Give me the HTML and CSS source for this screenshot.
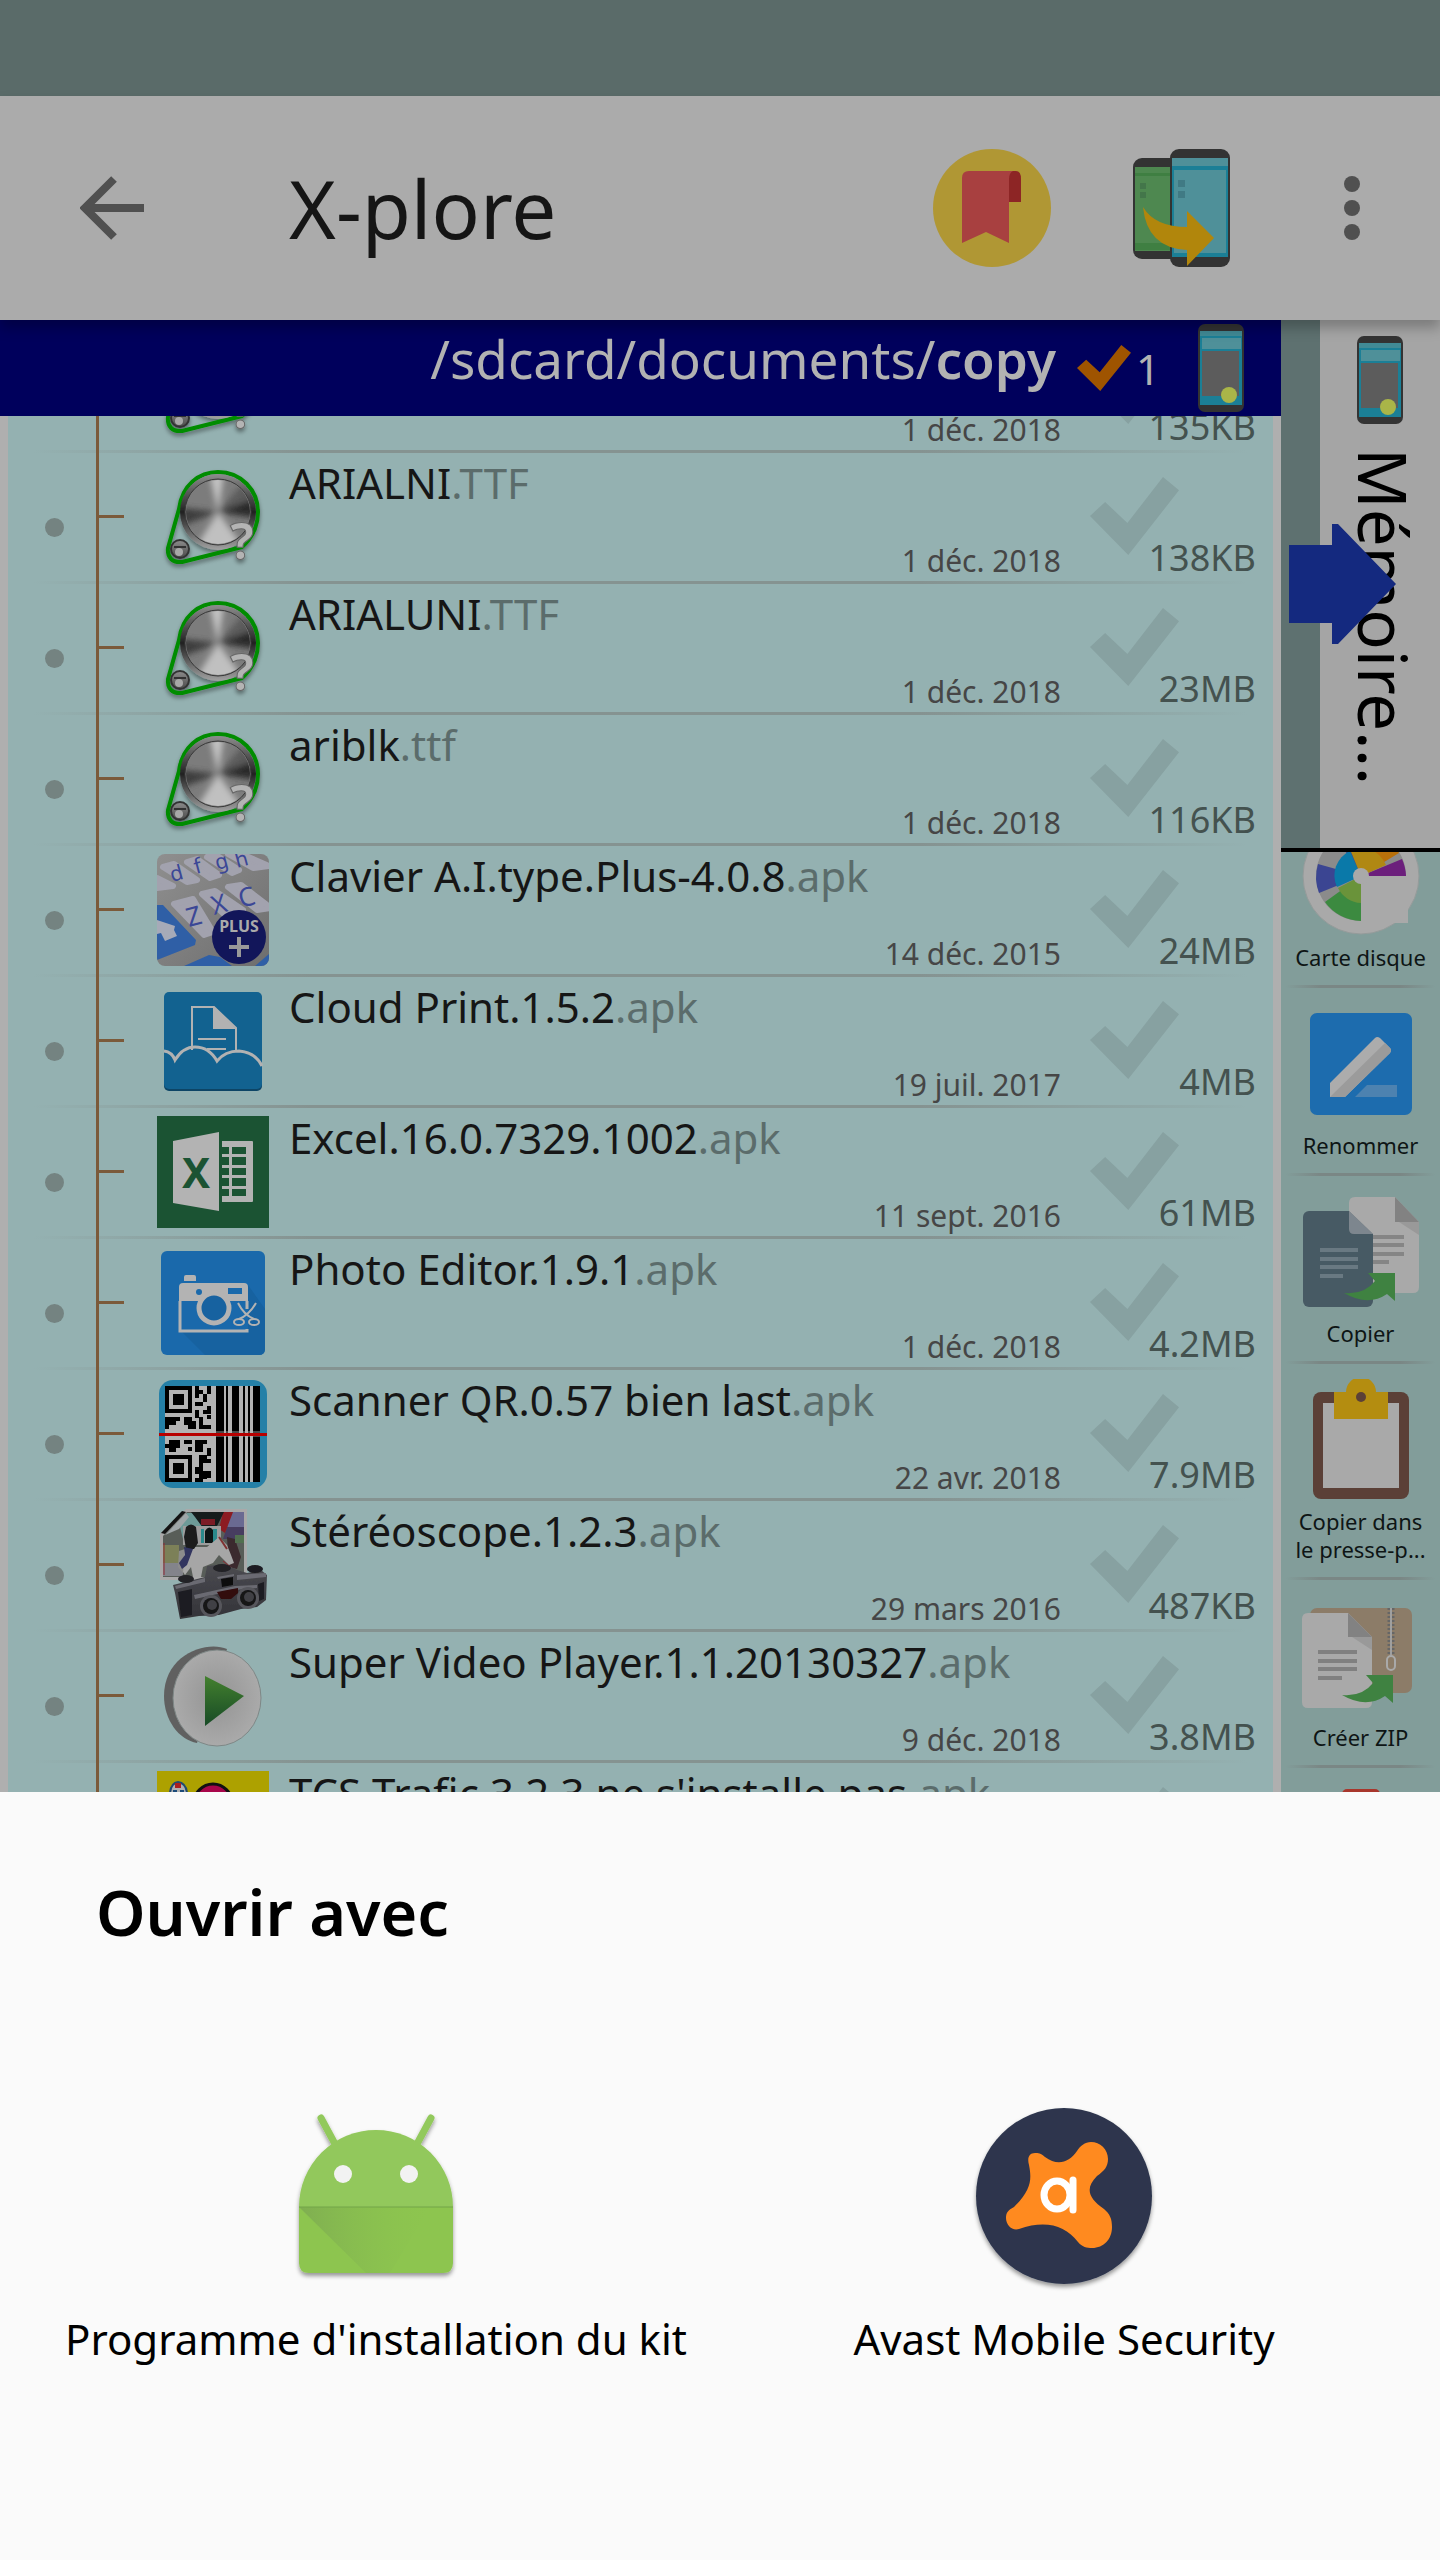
FILE: index.html
```html
<!DOCTYPE html>
<html lang="fr">
<head>
<meta charset="utf-8">
<meta name="viewport" content="width=device-width, initial-scale=1">
<title>X-plore</title>
<link rel="stylesheet" href="styles.css">
</head>
<body>
<svg class="sprite" width="0" height="0" aria-hidden="true">
  <defs>
    <linearGradient id="metal" x1="0" y1="0" x2="0" y2="1"><stop offset="0" stop-color="#8c8c8c"/><stop offset="1" stop-color="#4a4a4a"/></linearGradient>
    <linearGradient id="rim" x1="0" y1="0" x2="0" y2="1"><stop offset="0" stop-color="#8d8d8d"/><stop offset=".5" stop-color="#222"/><stop offset="1" stop-color="#a2a2a2"/></linearGradient>
    <linearGradient id="playTri" x1="0" y1="0" x2="0" y2="1"><stop offset="0" stop-color="#43802e"/><stop offset="1" stop-color="#174a26"/></linearGradient>
    <radialGradient id="playFace"><stop offset="0" stop-color="#939393"/><stop offset="1" stop-color="#aaaaaa"/></radialGradient>
    <linearGradient id="droidShade" x1="0" y1="0" x2="1" y2="0"><stop offset="0" stop-color="#7fae51"/><stop offset="1" stop-color="#8bc34e" stop-opacity="0"/></linearGradient>
    <linearGradient id="keys" x1="0" y1="0" x2="1" y2="1"><stop offset="0" stop-color="#8f8f8f"/><stop offset="1" stop-color="#6e6e6e"/></linearGradient>
    <linearGradient id="body" x1="0" y1="0" x2="0" y2="1"><stop offset="0" stop-color="#4b4b51"/><stop offset="1" stop-color="#333338"/></linearGradient>
    <filter id="soft" x="-20%" y="-20%" width="140%" height="140%"><feDropShadow dx="0" dy="3" stdDeviation="2" flood-opacity=".4"/></filter>
    <filter id="sheen" x="-20%" y="-20%" width="140%" height="140%"><feGaussianBlur stdDeviation="3"/></filter>
    <filter id="photoSoft"><feGaussianBlur stdDeviation=".7"/></filter>
    <clipPath id="discClip"><circle cx="61" cy="51" r="32"/></clipPath>
  </defs>
  <symbol id="i-phone" viewBox="0 0 46 88">
    <rect width="46" height="88" rx="7" fill="#333"/>
    <path fill="#1b7f96" d="M2 7h42v74H2z"/>
    <path fill="#418a95" d="M2 7h42v5H2z"/>
    <path fill="#4f9099" d="M4 14h39v11H4z"/>
    <path fill="#5c5c5c" d="M4 27h37v45H4z"/>
    <circle cx="31" cy="71" r="8" fill="#a9b548"/>
  </symbol>
  <symbol id="i-font" viewBox="0 0 112 112">
    <g filter="url(#soft)">
      <path d="M22 48C25 24 42 11 61 11C84 11 101 29 101 51C101 64 96 76 85 86L25 101C15 102 10 96 11 87Z" fill="none" stroke="#008c00" stroke-width="4" stroke-linejoin="round"/>
      <circle cx="61" cy="51" r="38" fill="url(#rim)"/>
      <circle cx="61" cy="51" r="33" fill="#7c7c7c" stroke="#3a3a3a" stroke-width="1"/>
      <g clip-path="url(#discClip)"><g filter="url(#sheen)">
        <path d="M61 51L105 34V58Z" fill="#2c2c2c"/>
        <path d="M61 51L17 46V68Z" fill="#3c3c3c"/>
        <path d="M61 51L51 6H68Z" fill="#c4c4c4"/>
        <path d="M61 51L30 100H96Z" fill="#c0c0c0"/>
        <path d="M61 51L96 10L105 34Z" fill="#5c5c5c"/>
      </g></g>
      <circle cx="23" cy="88" r="9" fill="url(#metal)" stroke="#333" stroke-width="2"/>
      <circle cx="22" cy="91" r="4" fill="#a8a8a8"/><path d="M17 86h12" stroke="#333" stroke-width="2"/>
      <text x="73" y="98" class="glyph-question">?</text>
    </g>
  </symbol>
  <symbol id="i-keyboard" viewBox="0 0 112 112">
    <clipPath id="kclip"><rect width="112" height="112" rx="8"/></clipPath>
    <g clip-path="url(#kclip)">
      <rect width="112" height="112" fill="url(#keys)"/>
      <g fill="#a2a2ae" stroke="#a2a2ae" stroke-width="6" stroke-linejoin="round">
        <path d="M17 50L36 45L56 78L47 81ZM45 40L58 37L86 56L68 61ZM71 33L84 31L114 54L100 56ZM6 13L17 10L40 26L30 28ZM30 8L40 5L62 21L53 24ZM50 3L59 1L82 16L75 19ZM71 0L80 -2L112 12L96 14ZM0 24L16 32L0 34Z"/>
      </g>
      <path d="M0 51L6 51L39 86L38 91L0 106ZM27 112L52 101L63 103L75 112ZM98 112L112 100V112Z" fill="#2f5fa6"/>
      <path d="M0 66L18 72L17 76L20 82L8 87L4 79L0 80Z" fill="#a6aab8"/>
      <g class="glyph-keys">
        <text x="15" y="28" transform="rotate(-15 15 28)">d</text>
        <text x="39" y="20" transform="rotate(-15 39 20)">f</text>
        <text x="60" y="16" transform="rotate(-15 60 16)">g</text>
        <text x="80" y="14" transform="rotate(-15 80 14)">h</text>
      </g>
      <g class="glyph-keys glyph-keys-large">
        <text x="32" y="73" transform="rotate(-15 32 73)">Z</text>
        <text x="57" y="61" transform="rotate(-15 57 61)">X</text>
        <text x="84" y="54" transform="rotate(-15 84 54)">C</text>
      </g>
      <circle cx="82" cy="83" r="27" fill="#12165a"/>
      <text x="82" y="78" text-anchor="middle" class="glyph-plus">PLUS</text>
      <path d="M72 93h20M82 83v20" stroke="#999" stroke-width="4"/>
    </g>
  </symbol>
  <symbol id="i-cloud" viewBox="0 0 112 112">
    <rect x="7" y="9" width="98" height="97" rx="5" fill="#0d4566"/>
    <rect x="7" y="7" width="98" height="97" rx="5" fill="#126290"/>
    <path d="M35 65V22H57L79 43V66" fill="none" stroke="#b2b2b2" stroke-width="2"/>
    <path d="M56 21L79 44H56Z" fill="#b2b2b2"/>
    <path d="M41 54H69M50 64H69" stroke="#b2b2b2" stroke-width="2"/>
    <path d="M7 66Q15 67 18 75Q26 62 38 62Q52 62 60 76Q68 66 82 66Q98 67 105 81" fill="none" stroke="#b2b2b2" stroke-width="3"/>
  </symbol>
  <symbol id="i-excel" viewBox="0 0 112 112">
    <path fill="#1b5333" d="M0 0h112v112H0z"/>
    <path fill="#b3b3b3" d="M16 25L62 16V95L16 87ZM65 25H95q1 0 1 1V85q0 1-1 1H65Z"/>
    <path fill="#1b5333" d="M65 31h7v7h-7zM75 31h14v7H75zM65 41h7v8h-7zM75 41h14v8H75zM65 52h7v7h-7zM75 52h14v7H75zM65 62h7v8h-7zM75 62h14v8H75zM65 73h7v7h-7zM75 73h14v7H75z"/>
    <text x="39" y="72" text-anchor="middle" class="glyph-excel">X</text>
  </symbol>
  <symbol id="i-photo" viewBox="0 0 112 112">
    <rect x="4" y="4" width="104" height="104" rx="6" fill="#1a69ab"/>
    <path d="M24 84L48 108H102Q108 108 108 102V62L91 38V84Z" fill="#1762a0"/>
    <path fill="#b3b3b3" d="M27 34V30q0-2 2-2h8q2 0 2 2v4zM22 40q0-4 4-4h61q4 0 4 4v14H22z"/>
    <path fill="#1a69ab" d="M71 41h14v6H71z"/><circle cx="42" cy="45" r="3" fill="#1a69ab"/>
    <path d="M23 54V84H90V82M90 54V62" fill="none" stroke="#b3b3b3" stroke-width="3"/>
    <circle cx="57" cy="61" r="15" fill="#1762a0" stroke="#b3b3b3" stroke-width="5"/>
    <g fill="none" stroke="#b3b3b3" stroke-width="2"><path d="M81 56Q87 68 97 72M99 56Q92 68 82 72"/><ellipse cx="82" cy="75" rx="5" ry="3"/><ellipse cx="97" cy="75" rx="5" ry="3"/></g>
  </symbol>
  <symbol id="i-qr" viewBox="0 0 112 112">
    <rect x="2" y="2" width="108" height="108" rx="14" fill="#2580a7"/>
    <path fill="#b3b3b3" d="M8 8h95v96H8z"/>
    <path d="M8 8h27v27H8zM8 77h27v27H8z"/>
    <path fill="#b3b3b3" d="M12 12h19v19H12zM12 81h19v19H12z"/>
    <path d="M16 16h11v11H16zM16 85h11v11H16zM38 8h4v4h4v4h-4v4h-4zM50 8h4v8h-4zM46 16h4v8h-4zM38 24h8v4h-8zM50 28h4v8h-8v-4h4zM38 32h4v8h-4zM8 39h15v4h-4v4h-7v4H8zM27 39h8v4h4v8h-8v-4h-4zM42 39h4v8h8v4H42zM50 37h4v4h-4zM12 62h11v8h-4v4h-7v-4H8v-4h4zM27 62h8v4h-8zM31 69h4v4h-4zM38 62h12v4h-4v8h-8zM50 70h4v8h-4zM42 77h8v4h4v4h-8v4h-4zM38 89h8v4h4v8h-4v3h-8v-4h4v-4h-4zM50 93h4v7h-4zM59 8h8v96h-8zM69 8h2v96h-2zM75 8h7v96h-7zM86 8h2v96h-2zM91 8h2v96h-2zM96 8h7v96h-7z"/>
    <path fill="#b3b3b3" opacity=".4" d="M8 53h95v6H8z"/>
    <path fill="#b80000" d="M2 55h108v3H2z"/>
  </symbol>
  <symbol id="i-stereo" viewBox="0 0 112 112">
    <path fill="#a9a9a9" d="M29 0H90V71H3V25Z"/>
    <g filter="url(#photoSoft)">
      <path fill="#595d58" d="M30 3H87V68H6V27Z"/>
      <path fill="#6d9a97" d="M30 4H46V30H26L22 14Z"/>
      <path fill="#6a6a92" d="M72 3H87V22H70Z"/><path fill="#463e60" d="M70 18H87V30H66Z"/>
      <path fill="#8c1d22" d="M66 3H76L68 24L62 20Z"/><path fill="#141a1e" d="M34 3H67L60 17L46 19L38 8Z"/>
      <path fill="#7b1f26" d="M44 10H58V16H44Z"/>
      <path fill="#9c9c9c" d="M26 17H64V36H26Z"/><path fill="#101214" d="M48 22Q52 15 57 22V34H48Z"/>
      <path fill="#2c8a8c" d="M56 20h4v14h-4zM44 20h3v14h-3z"/>
      <path fill="#7c8059" d="M6 36H22V54H6Z"/><path fill="#83848b" d="M6 54H26V67H6Z"/>
      <path fill="#3b2a2e" d="M70 28L78 30L84 48L80 60L72 58Z"/><path fill="#51704f" d="M78 26H87V34H78Z"/>
      <path fill="#a6a6a6" d="M62 28L70 36L74 46L77 54L72 56L62 46L56 54L46 58L44 68H36L34 58L28 66L24 60L24 44L30 38L50 38Z"/>
      <path fill="#8c8c8c" d="M22 42L28 40L26 64L21 58Z"/>
      <path fill="#1a1c1e" d="M29 18Q34 13 39 18L41 34L37 40L29 40L27 28Z"/><path fill="#30345e" d="M27 38L36 40L30 56L25 60L22 54L28 46Z"/>
      <path stroke="#902b33" stroke-width="1" d="M7 34V66M66 52L76 60"/><path stroke="#7f3030" stroke-width="2" d="M62 28L70 40"/>
    </g>
    <path fill="#141414" d="M4 24L25 2L29 3L8 25Z"/><path fill="#9fa6a8" d="M8 26L29 4L32 8L22 20Z"/>
    <g filter="url(#photoSoft)">
      <path fill="url(#body)" d="M16 76L48 68L50 57L68 55L80 61L90 64L104 61L110 66L109 91L100 98L84 100L62 106L42 107L23 110L18 84Z"/>
      <path fill="#6b6b72" d="M18 77L48 69V73L19 80ZM80 66L109 64V68L80 71ZM37 86L78 77L100 76V79L78 81L38 90ZM60 68L77 65V67L61 70Z"/>
      <path fill="#1d1d20" d="M21 83L35 80V106L24 108ZM101 75L107 73V90L102 92Z"/>
      <path fill="#0d0d0f" d="M64 70L76 68V76L65 78Z"/>
      <ellipse cx="65" cy="59" rx="9" ry="4" fill="#222226"/><ellipse cx="29" cy="70" rx="8" ry="4" fill="#222226"/><ellipse cx="98" cy="60" rx="8" ry="4" fill="#1d1d20"/>
      <circle cx="54" cy="97" r="11" fill="#57575c"/><circle cx="54" cy="97" r="8" fill="#151517"/><circle cx="55" cy="96" r="5" fill="#404044"/>
      <circle cx="91" cy="89" r="11" fill="#57575c"/><circle cx="91" cy="89" r="8" fill="#151517"/><circle cx="92" cy="88" r="5" fill="#404044"/>
      <path fill="#30090d" d="M60 83L81 79V84L74 90L64 90Z"/>
    </g>
  </symbol>
  <symbol id="i-play" viewBox="0 0 112 112">
    <path fill="#606060" d="M70 9C50 0 7 14 7 56C7 80 22 100 40 103Z"/>
    <ellipse cx="60" cy="58" rx="44" ry="48" fill="url(#playFace)" stroke="#7e8786" stroke-width="1"/>
    <path fill="url(#playTri)" d="M48 36L87 56L48 86Z"/>
  </symbol>
  <symbol id="i-tcs" viewBox="0 0 112 112">
    <path fill="#ada100" d="M0 0h112v112H0z"/>
    <circle cx="56" cy="32" r="19" fill="#a8064a" stroke="#111" stroke-width="3"/>
    <circle cx="56" cy="32" r="8" fill="#b0b0b0"/>
    <path d="M13 22Q14 12 21 11Q29 12 30 22Z" fill="#b0b0b0" stroke="#214a72" stroke-width="2"/><path fill="#aa2020" d="M18 12h6v5h-6z"/><path fill="#1c4b79" d="M16 19h4v4h-4zM23 19h4v4h-4z"/>
  </symbol>
  <symbol id="t-disk" viewBox="0 0 120 120">
    <circle cx="60" cy="61" r="58" fill="#a9a9a9" stroke="#949b9a"/>
    <circle cx="60" cy="61" r="45" fill="#8b8b8b"/>
    <path fill="#3c8a40" d="M60 61V106A45 45 0 0 1 24 87Z"/>
    <path fill="#3b4592" d="M60 61L18 78A45 45 0 0 1 17 49Z"/>
    <path fill="#3b4592" d="M60 61L36 23A45 45 0 0 1 50 17Z"/>
    <path fill="#b8700a" d="M60 61L64 16A45 45 0 0 1 98 38Z"/>
    <path fill="#6c1f7c" d="M60 61L101 44A45 45 0 0 1 105 61Z"/>
    <path fill="#a9a9a9" d="M60 61H107V108H60Z"/>
    <path fill="#6a933a" d="M60 61V88A27 27 0 0 1 37 73Z"/>
    <path fill="#0a79a9" d="M60 61L36 72A27 27 0 0 1 49 36Z"/>
    <path fill="#b08813" d="M60 61L48 32A32 32 0 0 1 85 50Z"/>
    <circle cx="60" cy="61" r="8" fill="#a9a9a9"/>
  </symbol>
  <symbol id="t-rename" viewBox="0 0 120 120">
    <rect x="9" y="10" width="102" height="102" rx="7" fill="#1d6cae"/>
    <path fill="#acacac" d="M29 80L74 35Q76 33 79 35L89 45Q91 47 89 50L44 94H29Z"/>
    <path fill="#9b9b9b" d="M84 40L89 45Q91 47 89 50L44 94H29Z"/>
    <path fill="#4d82b0" d="M66 82H96V94H54Z"/>
  </symbol>
  <symbol id="arrow-green" viewBox="0 0 120 120">
    <path fill="#3f8241" d="M67 82H94V110L86 103Q67 116 43 102Q63 104 74 90Z"/>
  </symbol>
  <symbol id="t-copy" viewBox="0 0 120 120">
    <path fill="#a9a9a9" d="M54 6H94L118 31V96q0 6-6 6H60V43z"/>
    <path fill="#828282" d="M94 6L118 31H94Z"/><path fill="#999" d="M98 31H118V44Z"/>
    <rect x="2" y="20" width="70" height="96" rx="6" fill="#475a64"/>
    <path fill="#7d868e" d="M48 20L72 43H53q-5 0-5-5z"/><path fill="#a9a9a9" d="M48 20V12q0-6 6-6H72V43Z"/>
    <path stroke="#697982" stroke-width="4" d="M19 59H57M19 68H57M19 76H57M19 85H42"/>
    <path stroke="#858585" stroke-width="4" d="M72 46H103M72 54H103M72 63H103M72 71H88"/>
    <use href="#arrow-green" width="120" height="120"/>
  </symbol>
  <symbol id="t-clip" viewBox="0 0 120 120">
    <rect x="12" y="13" width="96" height="107" rx="8" fill="#5b4037"/>
    <path fill="#a9a9a9" d="M22 24H98V109H22Z"/>
    <path fill="#b48d10" d="M33 13H45A15 15 0 0 1 75 13H87V40H33Z"/>
    <circle cx="60" cy="18" r="5" fill="#5b4037"/>
  </symbol>
  <symbol id="t-zip" viewBox="0 0 120 120">
    <rect x="9" y="13" width="102" height="85" rx="7" fill="#8c7c68"/>
    <path d="M90 13V60" stroke="#666" stroke-width="7" stroke-dasharray="2 2"/><path d="M90 13V60" stroke="#a0a0a0" stroke-width="2"/>
    <rect x="86" y="61" width="8" height="14" rx="4" fill="none" stroke="#a9a9a9" stroke-width="2"/>
    <path fill="#a9a9a9" d="M7 18H47L71 42V107q0 6-6 6H7q-6 0-6-6V24q0-6 6-6z"/>
    <path fill="#828282" d="M47 18L71 42H47Z"/><path fill="#999" d="M51 42H71V55Z"/>
    <path stroke="#808080" stroke-width="4" d="M17 57H56M17 66H56M17 74H56M17 83H41"/>
    <use href="#arrow-green" x="-2" y="-2" width="120" height="120"/>
  </symbol>
  <symbol id="t-delete" viewBox="0 0 120 120"><rect x="41" y="6" width="38" height="40" rx="5" fill="#a8362c"/></symbol>
</svg>

<div class="status-bar"></div>

<header class="toolbar">
  <button class="back" aria-label="Retour">
    <svg viewBox="0 0 64 64"><path d="M64 32H6M34 3L5 32L34 61" fill="none" stroke="#505050" stroke-width="8"/></svg>
  </button>
  <h1 class="title">X-plore</h1>
  <button class="action" aria-label="Favoris">
    <svg viewBox="0 0 120 120"><circle cx="61" cy="60" r="59" fill="#b09734"/><path fill="#8d2525" d="M77 23h8q5 0 5 8v23H77z"/><path fill="#a84040" d="M38 23H82q-4 2-4 8V95L55 84L31 95V30q0-7 7-7z"/></svg>
  </button>
  <button class="action" aria-label="Changer de panneau">
    <svg viewBox="0 0 120 120">
      <rect x="12" y="10" width="60" height="101" rx="9" fill="#333"/><path fill="#4e8850" d="M14 19h50v84H14z"/><path fill="#3f7f42" d="M14 25h50v3H14zM14 95h50v7H14z"/><path fill="#43764a" d="M19 35h6v6h-6zM19 44h6v6h-6z"/>
      <rect x="49" y="1" width="60" height="118" rx="9" fill="#333"/><path fill="#1b7f96" d="M51 10h56v99H51z"/><path fill="#4f9099" d="M51 10h56v8H51zM53 22h52v83H53z"/><path fill="#407a84" d="M57 32h7v7h-7zM57 43h7v7h-7z"/>
      <path fill="#b1860c" d="M22 59Q34 79 66 79V63L93 90L66 118V102Q26 100 22 59Z"/>
    </svg>
  </button>
  <button class="menu" aria-label="Plus d'options">
    <svg viewBox="0 0 64 64"><g fill="#505050"><circle cx="32" cy="8" r="8"/><circle cx="32" cy="32" r="8"/><circle cx="32" cy="56" r="8"/></g></svg>
  </button>
</header>

<main class="panes">
  <section class="pane">
    <div class="path-bar">
      <span class="path">/sdcard/documents/<b>copy</b></span>
      <span class="selection"><i class="tick-mark"></i>1</span>
      <svg class="phone"><use href="#i-phone"/></svg>
    </div>
    <div class="scroller">
    <ul class="files">
      <li class="file"><span class="dot"></span><span class="branch"></span><svg class="thumb"><use href="#i-font"/></svg><div class="info"><span class="date">1 déc. 2018</span><input class="pick" type="checkbox" aria-label="Sélectionner"><span class="size">135KB</span></div></li>
      <li class="file"><span class="dot"></span><span class="branch"></span><svg class="thumb"><use href="#i-font"/></svg><div class="info"><span class="name">ARIALNI<span class="ext">.TTF</span></span><span class="date">1 déc. 2018</span><input class="pick" type="checkbox" aria-label="ARIALNI.TTF"><span class="size">138KB</span></div></li>
      <li class="file"><span class="dot"></span><span class="branch"></span><svg class="thumb"><use href="#i-font"/></svg><div class="info"><span class="name">ARIALUNI<span class="ext">.TTF</span></span><span class="date">1 déc. 2018</span><input class="pick" type="checkbox" aria-label="ARIALUNI.TTF"><span class="size">23MB</span></div></li>
      <li class="file"><span class="dot"></span><span class="branch"></span><svg class="thumb"><use href="#i-font"/></svg><div class="info"><span class="name">ariblk<span class="ext">.ttf</span></span><span class="date">1 déc. 2018</span><input class="pick" type="checkbox" aria-label="ariblk.ttf"><span class="size">116KB</span></div></li>
      <li class="file"><span class="dot"></span><span class="branch"></span><svg class="thumb"><use href="#i-keyboard"/></svg><div class="info"><span class="name">Clavier A.I.type.Plus-4.0.8<span class="ext">.apk</span></span><span class="date">14 déc. 2015</span><input class="pick" type="checkbox" aria-label="Clavier A.I.type"><span class="size">24MB</span></div></li>
      <li class="file"><span class="dot"></span><span class="branch"></span><svg class="thumb"><use href="#i-cloud"/></svg><div class="info"><span class="name">Cloud Print.1.5.2<span class="ext">.apk</span></span><span class="date">19 juil. 2017</span><input class="pick" type="checkbox" aria-label="Cloud Print"><span class="size">4MB</span></div></li>
      <li class="file"><span class="dot"></span><span class="branch"></span><svg class="thumb"><use href="#i-excel"/></svg><div class="info"><span class="name">Excel.16.0.7329.1002<span class="ext">.apk</span></span><span class="date">11 sept. 2016</span><input class="pick" type="checkbox" aria-label="Excel"><span class="size">61MB</span></div></li>
      <li class="file"><span class="dot"></span><span class="branch"></span><svg class="thumb"><use href="#i-photo"/></svg><div class="info"><span class="name">Photo Editor.1.9.1<span class="ext">.apk</span></span><span class="date">1 déc. 2018</span><input class="pick" type="checkbox" aria-label="Photo Editor"><span class="size">4.2MB</span></div></li>
      <li class="file"><span class="dot"></span><span class="branch"></span><svg class="thumb"><use href="#i-qr"/></svg><div class="info"><span class="name">Scanner QR.0.57 bien last<span class="ext">.apk</span></span><span class="date">22 avr. 2018</span><input class="pick" type="checkbox" aria-label="Scanner QR"><span class="size">7.9MB</span></div></li>
      <li class="file"><span class="dot"></span><span class="branch"></span><svg class="thumb"><use href="#i-stereo"/></svg><div class="info"><span class="name">Stéréoscope.1.2.3<span class="ext">.apk</span></span><span class="date">29 mars 2016</span><input class="pick" type="checkbox" aria-label="Stéréoscope"><span class="size">487KB</span></div></li>
      <li class="file"><span class="dot"></span><span class="branch"></span><svg class="thumb"><use href="#i-play"/></svg><div class="info"><span class="name">Super Video Player.1.1.20130327<span class="ext">.apk</span></span><span class="date">9 déc. 2018</span><input class="pick" type="checkbox" aria-label="Super Video Player"><span class="size">3.8MB</span></div></li>
      <li class="file"><span class="dot"></span><span class="branch"></span><svg class="thumb"><use href="#i-tcs"/></svg><div class="info"><span class="name">TCS Trafic.3.2.3 ne s'installe pas<span class="ext">.apk</span></span><input class="pick" type="checkbox" aria-label="TCS Trafic"></div></li>
    </ul>
    </div>
  </section>

  <aside class="side">
    <div class="other-pane">
      <div class="tab">
        <svg class="phone"><use href="#i-phone"/></svg>
        <span class="tab-label">Mémoire...</span>
      </div>
      <button class="switch" aria-label="Afficher l'autre panneau">
        <svg viewBox="0 0 107 120"><path fill="#14297f" d="M0 21H43V0H49L107 60L49 120H43V99H0Z"/></svg>
      </button>
    </div>
    <div class="scroller tools-scroller">
      <div class="tools">
        <button class="tool"><svg><use href="#t-disk"/></svg>Carte disque</button>
        <button class="tool"><svg><use href="#t-rename"/></svg>Renommer</button>
        <button class="tool"><svg><use href="#t-copy"/></svg>Copier</button>
        <button class="tool"><svg><use href="#t-clip"/></svg>Copier dans<br>le presse-p...</button>
        <button class="tool"><svg><use href="#t-zip"/></svg>Créer ZIP</button>
        <button class="tool" aria-label="Supprimer"><svg><use href="#t-delete"/></svg></button>
      </div>
    </div>
  </aside>
</main>

<section class="sheet">
  <h2 class="sheet-title">Ouvrir avec</h2>
  <div class="choices">
    <button class="choice">
      <svg viewBox="0 0 192 192">
        <g filter="url(#soft)">
          <path d="M41 18L55 44M151 18L137 44" stroke="#92c95c" stroke-width="7" stroke-linecap="round"/>
          <path fill="#92c85b" d="M19 107A77 77 0 0 1 173 107Z"/>
          <path fill="#8dc550" d="M19 107H173V163q0 10-10 10H29q-10 0-10-10z"/>
        </g>
        <path fill="url(#droidShade)" d="M19 107H150L110 173H86Z"/>
        <path stroke="#73a549" stroke-width="1" d="M19 107H173"/>
        <circle cx="63" cy="74" r="9" fill="#f2f2f2"/><circle cx="129" cy="74" r="9" fill="#f2f2f2"/>
      </svg>
      Programme d'installation du kit
    </button>
    <button class="choice">
      <svg viewBox="0 0 192 192">
        <circle cx="96" cy="96" r="88" fill="#2d364d" filter="url(#soft)"/>
        <path fill="#ff8a1f" d="M67 53C61 53 59 58 61 65C64 80 63 90 46 107C40 110 38 113 38 118C38 125 44 131 51 129C77 120 97 125 110 142C114 147 119 148 124 148C136 148 144 139 144 127C144 119 142 114 136 109C120 98 117 88 129 76C136 71 140 67 140 59C140 49 132 42 123 42C117 42 112 46 109 51C101 63 89 66 77 57C73 53 70 53 67 53Z"/>
        <ellipse cx="89" cy="95" rx="13" ry="14" fill="none" stroke="#fff" stroke-width="7"/><path d="M105 80V110" stroke="#fff" stroke-width="7" stroke-linecap="round"/>
      </svg>
      Avast Mobile Security
    </button>
  </div>
</section>
</body>
</html>
```
FILE: styles.css
```css
* {
  box-sizing: border-box;
}

body {
  margin: 0;
  height: 100vh;
  display: flex;
  flex-direction: column;
  overflow: hidden;
  font-family: "Noto Sans", "Open Sans", sans-serif;
  background: #fafafa;
}

button {
  padding: 0;
  border: 0;
  background: none;
  font: inherit;
  color: inherit;
}

svg {
  display: block;
}

.sprite {
  position: absolute;
}

/* lettering inside the icons */
.glyph-question {
  font-size: 50px;
  font-weight: 700;
  fill: #b4b4b4;
  stroke: #666;
  stroke-width: 1px;
}

.glyph-keys {
  font-size: 21px;
  fill: #3b4796;
}

.glyph-keys-large {
  font-size: 26px;
}

.glyph-plus {
  font-size: 16px;
  font-weight: 700;
  fill: #aaa;
}

.glyph-excel {
  font-size: 42px;
  font-weight: 700;
  fill: #1b5333;
}

/* top bars */
.status-bar {
  flex: none;
  height: 96px;
  background: #5a6b69;
}

.toolbar {
  position: relative;
  z-index: 1;
  flex: none;
  height: 224px;
  padding: 0 12px 0 80px;
  display: flex;
  align-items: center;
  background: #ababab;
  box-shadow: 0 8px 12px rgba(0, 0, 0, 0.25);
}

.back,
.back svg {
  width: 64px;
  height: 64px;
}

.title {
  flex: 1;
  margin: 0 0 0 145px;
  font-size: 80px;
  font-weight: 400;
  line-height: 104px;
  color: #151515;
}

.action {
  width: 190px;
  display: flex;
  justify-content: center;
}

.action svg {
  width: 120px;
  height: 120px;
}

.menu {
  width: 152px;
  display: flex;
  justify-content: center;
}

.menu svg {
  width: 64px;
  height: 64px;
}

/* the two panes */
.panes {
  flex: 1;
  min-height: 0;
  display: flex;
  overflow: hidden;
}

.pane {
  flex: 1;
  min-width: 0;
  display: flex;
  flex-direction: column;
  background: #94b1b1;
}

.path-bar {
  flex: none;
  height: 96px;
  padding-right: 37px;
  display: flex;
  align-items: center;
  justify-content: flex-end;
  background: #00005c;
  color: #b2b2b2;
}

.path {
  padding-bottom: 20px;
  font-size: 53px;
  white-space: nowrap;
}

.path b {
  font-weight: 600;
}

.selection {
  width: 142px;
  padding-left: 21px;
  display: flex;
  align-items: center;
  gap: 5px;
  font-size: 42px;
}

.tick-mark {
  width: 54px;
  height: 46px;
  background: #9f5400;
  clip-path: polygon(0 50%, 17% 32%, 42% 59%, 82% 0, 100% 17%, 43% 100%);
}

.phone {
  flex: none;
  width: 46px;
  height: 88px;
}

.scroller {
  flex: 1;
  min-height: 0;
  overflow: hidden;
}

/* list scrolled part of the way through a row */
.files {
  margin: -94px 0 0;
  padding: 0;
  list-style: none;
  border: solid #afafaf;
  border-width: 0 8px;
}

.file {
  height: 131px;
  display: flex;
  background: linear-gradient(90deg, transparent 2%, #859391 24%, #859391 72%, transparent 98%) bottom / 100% 3px no-repeat;
}

.dot {
  flex: none;
  width: 19px;
  height: 19px;
  margin: 65px 32px 0 37px;
  border-radius: 50%;
  background: #748381;
}

.branch {
  flex: none;
  width: 61px;
  border-left: 3px solid #7b5a3a;
  background: linear-gradient(#7b5a3a, #7b5a3a) 0 62px / 25px 3px no-repeat;
}

.thumb {
  flex: none;
  width: 112px;
  height: 112px;
  margin-top: 8px;
}

.info {
  flex: 1;
  min-width: 0;
  padding: 0 17px 0 20px;
  display: grid;
  grid-template-columns: 1fr 195px;
  grid-template-rows: 76px 52px;
}

.name {
  grid-area: 1 / 1 / 2 / 3;
  font-size: 42px;
  line-height: 60px;
  color: #161616;
  white-space: nowrap;
}

.ext {
  color: #5b6c6b;
}

.date {
  grid-area: 2 / 1;
  justify-self: end;
  font-size: 30px;
  line-height: 64px;
  color: #464646;
}

.pick {
  appearance: none;
  grid-area: 1 / 2 / 3 / 3;
  width: 89px;
  height: 78px;
  margin: 24px 0 0 29px;
  background: #87a1a1;
  clip-path: polygon(0 50%, 17% 32%, 42% 59%, 82% 0, 100% 17%, 43% 100%);
}

.size {
  grid-area: 2 / 2;
  justify-self: end;
  font-size: 36px;
  line-height: 58px;
  color: #44524f;
}

/* right column */
.side {
  flex: none;
  width: 159px;
  display: flex;
  flex-direction: column;
}

.other-pane {
  position: relative;
  flex: none;
  height: 532px;
  padding-left: 39px;
  border-bottom: 4px solid #000;
  background: #5e7170;
}

.tab {
  height: 100%;
  padding-top: 16px;
  display: flex;
  flex-direction: column;
  align-items: center;
  gap: 24px;
  background: #a5a5a5;
}

.tab-label {
  padding-left: 8px;
  writing-mode: vertical-rl;
  font-size: 67px;
  line-height: 96px;
  color: #000;
}

.switch {
  position: absolute;
  top: 204px;
  left: 8px;
}

.switch svg {
  width: 107px;
  height: 120px;
}

.tools-scroller {
  background: #829d9a;
}

.tools {
  margin-top: -52px;
  display: flex;
  flex-direction: column;
}

.tool {
  padding: 15px 0 17px;
  font-size: 22px;
  line-height: 28px;
  text-align: center;
  color: #0e1515;
  background: linear-gradient(90deg, transparent 3%, #7a8785 25%, #7a8785 75%, transparent 97%) bottom / 100% 3px no-repeat;
}

.tool svg {
  width: 120px;
  height: 120px;
  margin: 0 auto 8px;
}

/* bottom sheet */
.sheet {
  position: relative;
  z-index: 2;
  flex: none;
  padding: 80px 32px 193px;
  background: #fafafa;
  color: #000;
}

.sheet-title {
  margin: 0 64px 148px;
  font-size: 63px;
  font-weight: 600;
  line-height: 80px;
}

.choices {
  display: grid;
  grid-template-columns: 1fr 1fr;
}

.choice {
  font-size: 42px;
  line-height: 56px;
}

.choice svg {
  width: 192px;
  height: 192px;
  margin: 0 auto 19px;
}
```
